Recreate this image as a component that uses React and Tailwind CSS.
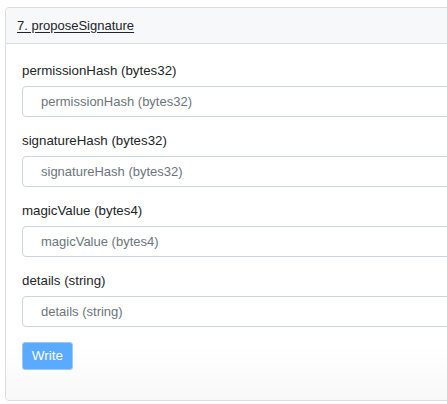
const fields = [
  'permissionHash (bytes32)',
  'signatureHash (bytes32)',
  'magicValue (bytes4)',
  'details (string)',
];

export default function App() {
  return (
    <div className="w-[447px] h-[404px] overflow-hidden bg-white pt-[7px] pl-[5px] font-['Liberation_Sans',Arial,sans-serif]">
      <div className="w-[470px] rounded-[4px] border border-[#dadcde] overflow-hidden">
        {/* header */}
        <div className="h-[36px] flex items-center px-[11px] bg-[#f7f8fa] border-b border-[#dadcde]">
          <span className="text-[13px] text-[#212529] underline underline-offset-2">7. proposeSignature</span>
        </div>

        {/* body */}
        <div className="pt-[17px] pb-[30px] px-[16px] bg-gradient-to-b from-white from-[85%] to-[#f8f8f8]">
          {fields.map((f) => (
            <div key={f} className="mb-[14px]">
              <label className="block h-[20px] leading-[20px] text-[13.3px] text-[#212529] mb-[5px]">{f}</label>
              <input
                placeholder={f}
                className="block w-[440px] h-[31px] rounded-[4px] border border-[#ced4da] pl-[18px] text-[13px] text-[#495057] placeholder:text-[#6c757d] outline-none"
              />
            </div>
          ))}
          <button className="mt-[1px] w-[51px] h-[28px] rounded-[3px] bg-[#5aabff] border border-[#9cc9fb] text-white text-[13.5px] leading-none">
            Write
          </button>
        </div>
      </div>
    </div>
  );
}
